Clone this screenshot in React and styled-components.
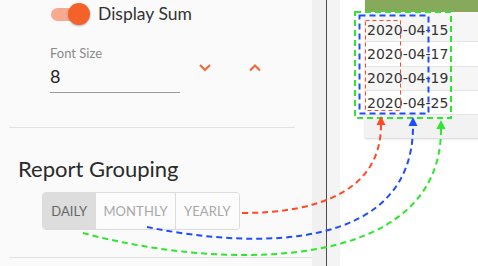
import React from 'react';
import styled, { createGlobalStyle } from 'styled-components';

const Global = createGlobalStyle`
  html, body { margin: 0; padding: 0; background: #fff; }
  body { font-family: Lato, "Open Sans", sans-serif; }
`;

const Page = styled.div`
  position: relative;
  display: flex;
  width: 478px;
  height: 266px;
  overflow: hidden;
`;

const Sidebar = styled.aside`
  width: 312px;
  flex: 0 0 312px;
  background: #fafafa;
  display: flex;
  flex-direction: column;
`;

const ToggleRow = styled.div`
  display: flex;
  align-items: center;
  height: 25px;
  padding-left: 51px;
  margin-top: 1px;
`;

const Switch = styled.span`
  position: relative;
  width: 38px;
  height: 24px;
  margin-right: 9px;
  flex: 0 0 auto;
`;

const Track = styled.span`
  position: absolute;
  left: 0;
  top: 6px;
  width: 34px;
  height: 13px;
  border-radius: 7px;
  background: #f9a98f;
`;

const Thumb = styled.span`
  position: absolute;
  left: 17px;
  top: 1px;
  width: 22px;
  height: 22px;
  border-radius: 50%;
  background: #f4622a;
  box-shadow: 0 1px 2px rgba(0, 0, 0, 0.3);
`;

const ToggleLabel = styled.span`
  font-size: 17.5px;
  color: #333;
`;

const FontRow = styled.div`
  display: flex;
  align-items: flex-start;
  padding-left: 50px;
  margin-top: 20px;
`;

const Field = styled.div`
  width: 130px;
  border-bottom: 1px solid #9a9a9a;
  padding-bottom: 6px;
`;

const FieldLabel = styled.div`
  font-size: 13px;
  line-height: 14px;
  color: #8a8a8a;
`;

const FieldValue = styled.div`
  font-size: 18px;
  line-height: 20px;
  color: #222;
  margin-top: 6px;
`;

const Stepper = styled.button`
  border: none;
  background: transparent;
  padding: 0;
  width: 14px;
  height: 10px;
  margin-top: 16px;
  margin-left: ${p => p.gap}px;
  display: flex;
  align-items: center;
  justify-content: center;
`;

const Divider = styled.hr`
  border: none;
  border-top: 1px solid #e2e2e2;
  margin: ${p => p.top}px ${p => p.right}px 0 9px;
`;

const Heading = styled.h2`
  margin: 28px 0 0 18px;
  font-size: 22px;
  line-height: 26px;
  font-weight: 400;
  color: #2a2a2a;
`;

const Group = styled.div`
  display: flex;
  margin: 10px 0 0 42px;
  height: 38px;
  width: 198px;
  border: 1px solid #dcdcdc;
  border-radius: 4px;
  overflow: hidden;
  box-sizing: border-box;
`;

const Segment = styled.button`
  width: ${p => p.w}px;
  border: none;
  border-left: ${p => (p.first ? 'none' : '1px solid #dcdcdc')};
  background: ${p => (p.active ? '#dddddd' : '#fcfcfc')};
  color: ${p => (p.active ? '#666' : '#a8a8a8')};
  font-family: Lato, sans-serif;
  font-size: 13px;
  letter-spacing: 0.1px;
  padding: 0;
`;

const Splitter = styled.div`
  display: flex;
  flex: 0 0 28px;
`;

const SplitTrack = styled.div`
  width: ${p => p.w}px;
  background: ${p => p.bg};
`;

const SplitLine = styled.div`
  width: 1px;
  background: #4a4a4a;
`;

const Main = styled.main`
  flex: 1;
  background: #fff;
  padding-left: 25px;
`;

const Card = styled.div`
  width: 140px;
  box-shadow: 0 1px 2px rgba(0, 0, 0, 0.18);
`;

const CardHeader = styled.div`
  height: 12px;
  background: #86a95b;
`;

const Rows = styled.div`
  padding-top: 6px;
  background: #f6f6f6;
`;

const Row = styled.div`
  height: 24.3px;
  box-sizing: border-box;
  display: flex;
  align-items: center;
  padding-left: 2px;
  background: ${p => (p.odd ? '#f6f6f6' : '#ffffff')};
  border-bottom: 1px solid #e4e4e4;
  font-family: "DejaVu Sans", sans-serif;
  font-size: 14px;
  color: #333;
`;

const CardFooter = styled.div`
  height: 23px;
  background: #f2f2f2;
`;

const Overlay = styled.svg`
  position: absolute;
  left: 0;
  top: 0;
  pointer-events: none;
`;

const Chevron = ({ up }) => (
  <svg width="14" height="9" viewBox="0 0 14 9">
    <path
      d={up ? 'M2 7.5 L7 2.5 L12 7.5' : 'M2 2 L7 7 L12 2'}
      fill="none"
      stroke="#f26a3c"
      strokeWidth="2.2"
    />
  </svg>
);

const dates = ['2020-04-15', '2020-04-17', '2020-04-19', '2020-04-25'];

const RED = '#ff4a26';
const BLUE = '#1e4cff';
const GREEN = '#2ee62e';

function Annotations() {
  const dash = { fill: 'none', strokeWidth: 2, strokeDasharray: '6 4' };
  return (
    <Overlay width="478" height="266" viewBox="0 0 478 266">
      <rect x="355" y="12" width="96" height="106" stroke={GREEN} {...dash} />
      <rect x="359.5" y="15.5" width="69" height="98" stroke={BLUE} {...dash} />
      <rect x="365.5" y="20.5" width="35" height="90" stroke={RED} fill="none" strokeWidth="1" strokeDasharray="4 3" />

      <path d="M242 213 C320 213 381 190 381 125" stroke={RED} {...dash} />
      <path d="M147 227 C260 250 413 250 413 126" stroke={BLUE} {...dash} />
      <path d="M83 233 C220 270 441 275 441 129" stroke={GREEN} {...dash} />

      <polygon points="381,116 376.5,125 385.5,125" fill={RED} />
      <polygon points="413,117 408.5,126 417.5,126" fill={BLUE} />
      <polygon points="441,120 436.5,129 445.5,129" fill={GREEN} />
    </Overlay>
  );
}

export default function App() {
  return (
    <>
      <Global />
      <Page>
        <Sidebar>
          <ToggleRow>
            <Switch>
              <Track />
              <Thumb />
            </Switch>
            <ToggleLabel>Display Sum</ToggleLabel>
          </ToggleRow>
          <FontRow>
            <Field>
              <FieldLabel>Font Size</FieldLabel>
              <FieldValue>8</FieldValue>
            </Field>
            <Stepper gap={18}><Chevron /></Stepper>
            <Stepper gap={36}><Chevron up /></Stepper>
          </FontRow>
          <Divider top={34} right={17} />
          <Heading>Report Grouping</Heading>
          <Group>
            <Segment first active w={53}>DAILY</Segment>
            <Segment w={80}>MONTHLY</Segment>
            <Segment w={65}>YEARLY</Segment>
          </Group>
          <Divider top={27} right={0} />
        </Sidebar>
        <Splitter>
          <SplitTrack w={14} bg="#f0f0f0" />
          <SplitLine />
          <SplitTrack w={13} bg="#f4f4f4" />
        </Splitter>
        <Main>
          <Card>
            <CardHeader />
            <Rows>
              {dates.map((d, i) => (
                <Row key={d} odd={i % 2 === 0}>{d}</Row>
              ))}
            </Rows>
            <CardFooter />
          </Card>
        </Main>
        <Annotations />
      </Page>
    </>
  );
}
